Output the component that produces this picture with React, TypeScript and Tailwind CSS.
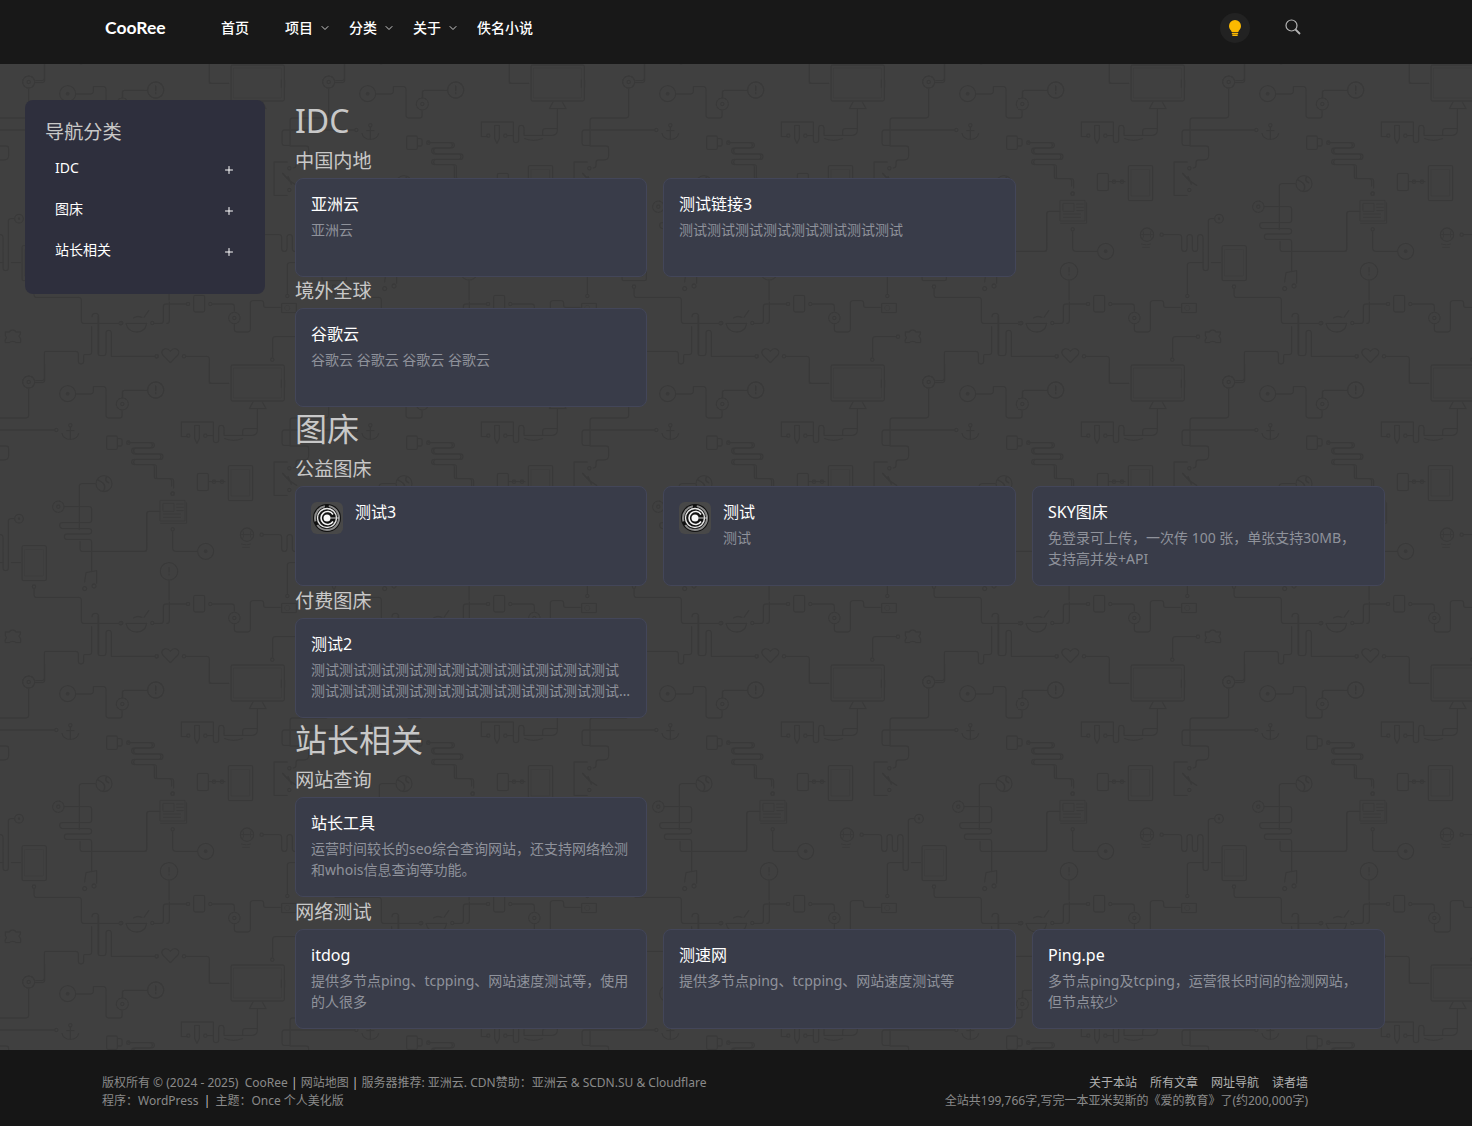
import React from 'react';
import { ChevronDown, Plus } from 'lucide-react';

interface Site {
  title: string;
  desc?: string;
  icon?: boolean;
}

interface Group {
  name: string;
  rows: string;
  sites: Site[];
}

interface Category {
  name: string;
  groups: Group[];
}

const t = '测试测试测试测试测试测试测试测试测试测试测试';

const categories: Category[] = [
  {
    name: 'IDC',
    groups: [
      {
        name: '中国内地',
        rows: 'auto-rows-[99px]',
        sites: [
          { title: '亚洲云', desc: '亚洲云' },
          { title: '测试链接3', desc: '测试测试测试测试测试测试测试测试' },
        ],
      },
      {
        name: '境外全球',
        rows: 'auto-rows-[99px]',
        sites: [{ title: '谷歌云', desc: '谷歌云 谷歌云 谷歌云 谷歌云' }],
      },
    ],
  },
  {
    name: '图床',
    groups: [
      {
        name: '公益图床',
        rows: 'auto-rows-[100px] mb-px',
        sites: [
          { title: '测试3', icon: true },
          { title: '测试', desc: '测试', icon: true },
          { title: 'SKY图床', desc: '免登录可上传，一次传 100 张，单张支持30MB，支持高并发+API' },
        ],
      },
      { name: '付费图床', rows: 'auto-rows-[100px]', sites: [{ title: '测试2', desc: t + t + t }] },
    ],
  },
  {
    name: '站长相关',
    groups: [
      {
        name: '网站查询',
        rows: 'auto-rows-[100px] mb-px',
        sites: [{ title: '站长工具', desc: '运营时间较长的seo综合查询网站，还支持网络检测和whois信息查询等功能。' }],
      },
      {
        name: '网络测试',
        rows: 'auto-rows-[100px]',
        sites: [
          { title: 'itdog', desc: '提供多节点ping、tcpping、网站速度测试等，使用的人很多' },
          { title: '测速网', desc: '提供多节点ping、tcpping、网站速度测试等' },
          { title: 'Ping.pe', desc: '多节点ping及tcping，运营很长时间的检测网站，但节点较少' },
        ],
      },
    ],
  },
];

// one 300px tile of the circuit wallpaper, in 3x coordinates
const TileArt = () => (
  <g fill="none" stroke="#393939" strokeWidth="4" strokeLinecap="round" strokeLinejoin="round">
    {/* monitor */}
    <rect x="333" y="15" width="160" height="108" rx="5" />
    <path d="M342 24h142v90h-142z" strokeWidth="2" />
    <path d="M400 124l-12 22h50l-12-22M484 60v22M494 60v22" />
    <path d="M326 70h-58v-60" />
    <path d="M412 148v62q0 16-16 16h-28v-12q0-8 8-8h36M368 226h-56M312 226v-22q0-8-8-8t-8 8v36q0 8-8 8t-8-8v-54h-96v44h20" />
    <circle cx="205" cy="227" r="5" />
    <circle cx="256" cy="227" r="5" />
    <path d="M262 227h18M314 236q26 10 54 0" />
    <path d="M224 196h14v40l-7 14-7-14z" />
    {/* warn badge + gear */}
    <circle cx="107" cy="90" r="24" strokeDasharray="5 3" />
    <path d="M107 78v14M107 98v3" />
    <path d="M80 91h-66q-6 0-6 6v16" />
    <circle cx="907" cy="132" r="18" strokeDasharray="6 4" />
    <circle cx="907" cy="132" r="5" />
    <path d="M907 113v-16q0-6 6-6h60" />
    <circle cx="1007" cy="90" r="24" strokeDasharray="5 3" />
    <path d="M1007 78v14M1007 98v3" />
    <circle cx="743" cy="101" r="24" />
    <circle cx="743" cy="101" r="4" fill="#393939" />
    <path d="M768 102h44q8 0 8-8v-14h30q8 0 8 8v78q0 8 8 8h34q6 0 6-6v-16" />
    {/* gear + long wire */}
    <circle cx="626" cy="66" r="18" strokeDasharray="6 4" />
    <circle cx="626" cy="66" r="5" />
    <path d="M646 68h20q8 0 8-8v-48M626 86v80q0 8-8 8h-100q-8 0-8 8v76h48q8 0 8 8v20q0 14-14 14h-16q-8 0-8 8v8q0 8-8 8" />
    <path d="M510 210h-16q-8 0-8 8v30q0 8 8 8h16" />
    <path d="M514 210h190" />
    <circle cx="709" cy="210" r="5" />
    <circle cx="751" cy="196" r="5" />
    <path d="M751 201v36M740 212h22M726 220q4 18 25 18t25-18" />
    {/* mug + coil */}
    <rect x="860" y="228" width="32" height="40" rx="4" />
    <path d="M892 236h10q4 0 4 4v14q0 4-4 4h-10" />
    <circle cx="925" cy="248" r="5" />
    <path d="M931 248h64q8 0 8 8t-8 8h-46q-8 0-8 8t8 10h72q8 0 8 8t-8 8h-72q-8 0-8 8t8 8h54q6 0 6 6v30q0 6 6 6h38q8 0 8 8v20" />
    <circle cx="1058" cy="401" r="5" />
    <circle cx="158" cy="401" r="5" />
    <path d="M25 248h64q8 0 8 8t-8 8h-46q-8 0-8 8t8 10h72q8 0 8 8t-8 8h-72q-8 0-8 8t8 8h54q6 0 6 6v30q0 6 6 6h38q8 0 8 8v14" />
    <circle cx="25" cy="248" r="5" />
    {/* phone + tablet */}
    <rect x="232" y="340" width="33" height="52" rx="5" />
    <path d="M265 365h50" />
    <circle cx="282" cy="365" r="5" />
    <circle cx="306" cy="365" r="5" />
    <rect x="325" y="317" width="73" height="105" rx="4" />
    <path d="M334 328h55v80h-55z" strokeWidth="2" />
    {/* pen tool */}
    <circle cx="508" cy="325" r="5" />
    <circle cx="508" cy="390" r="5" />
    <path d="M502 306h-40v100h40" />
    <path d="M488 340l20 22 22 14M514 372l-10-22" strokeWidth="5" />
    {/* newspaper */}
    <rect x="121" y="421" width="74" height="62" strokeWidth="3" />
    <path d="M200 428v62h-78M130 430h32v24h-32zM170 432h20M170 442h20M170 452h20M130 462h52M130 472h52" strokeWidth="3" />
    <path d="M120 454h-32q-8 0-8 8v104q0 8-8 8h-72" />
    <circle cx="158" cy="508" r="5" />
    <path d="M158 514v50q0 10 10 10h62" />
    <circle cx="257" cy="574" r="24" />
    <circle cx="257" cy="574" r="4" fill="#393939" />
    {/* globe + wire */}
    <circle cx="852" cy="371" r="24" />
    <path d="M834 360q18 8 20 18t-6 16M860 350q-8 12 6 18" strokeWidth="5" />
    <path d="M826 371h-40q-8 0-8 8v130" />
    <circle cx="715" cy="440" r="17" strokeDasharray="6 4" />
    <circle cx="715" cy="440" r="5" />
    <path d="M733 440h74q8 0 8 8v32q0 8-8 8h-80q-8 0-8 8t8 10h80q8 0 8 8t-8 8h-66q-8 0-8 8t8 8h66q8 0 8 8v88" />
    <path d="M780 544v22q0 8 8 8h188q4 0 4-4V462q0-8 8-8h32" />
    <path d="M794 666l4-28 32-6v38M794 680a6 6 0 1 0 .1 0M822 672a6 6 0 1 0 .1 0" />
    {/* tablet and ball */}
    <circle cx="381" cy="524" r="20" />
    <path d="M368 510q8 14 0 28M394 510q-8 14 0 28M362 524h38M364 552q16 6 28 0M368 562h20" strokeWidth="3" />
    <circle cx="425" cy="524" r="5" />
    <path d="M431 524h46q8 0 8 8v34q0 8 8 8t8-8v-34q0-8 8-8t8 8v34q0 8 8 8t8-8v-34q0-8 8-8t8 8v92q0 8 8 8t8-8V484q0-8 8-8h8" />
    <circle cx="597" cy="476" r="13" />
    <circle cx="597" cy="476" r="2" fill="#393939" />
    <path d="M550 608h-40q-8 0-8 8v86M574 608h28" />
    <circle cx="502" cy="708" r="5" />
    <rect x="606" y="557" width="73" height="105" rx="5" />
    <path d="M615 568h55v80h-55z" strokeWidth="2" />
    <circle cx="642" cy="680" r="5" />
    <path d="M642 686v18q0 8 8 8h126q8 0 8 8v62q0 8 8 8h104" />
    <circle cx="902" cy="790" r="5" />
    {/* warn + phone + bowl row */}
    <circle cx="147" cy="634" r="26" strokeDasharray="5 3" />
    <path d="M147 622v14M147 642v3M147 662v58" />
    <rect x="221" y="706" width="33" height="50" rx="5" />
    <circle cx="204" cy="732" r="5" />
    <circle cx="271" cy="732" r="5" />
    <path d="M198 732h-60q-8 0-8 8v42q0 8-8 8h-20M148 726v56q0 8-8 8M277 732h58q8 0 8 8v14" />
    <circle cx="97" cy="789" r="5" />
    <path d="M18 790h62q-4 26-30 26t-32-26zM40 774q12-8 26-2M72 772l14-20" />
    <circle cx="4" cy="789" r="5" />
    <circle cx="343" cy="774" r="17" strokeDasharray="6 4" />
    <circle cx="343" cy="774" r="5" />
    <path d="M343 794v14q0 8 8 8h32q8 0 8-8v-78q0-8 8-8h24q8 0 8 8v6q0 6 6 6h44" />
    <rect x="485" y="730" width="44" height="28" rx="2" />
    <circle cx="502" cy="744" r="8" strokeWidth="2" />
    {/* puzzle */}
    <path d="M556 816h12q2-6 10-6t10 6h14q0 8-4 10t4 10v12h-14q-2-4-10-4t-10 4h-12q-2-10 2-12t-2-8z" />
    <circle cx="534" cy="830" r="5" />
    <path d="M528 830h-62q-8 0-8 8v54" />
    <circle cx="457" cy="899" r="5" />
    {/* heart and lower wires */}
    <path d="M151 908l-22-22q-8-12 2-18t20 6q10-12 20-6t2 18z" />
    <circle cx="110" cy="889" r="5" />
    <circle cx="192" cy="889" r="5" />
    <path d="M104 889h-104M198 889h62q8 0 8 8v65q0 8 8 8h50" />
    <circle cx="1010" cy="889" r="5" />
    <path d="M1004 889h-122q-8 0-8 0v-70q0-8-8-8t-8 8v60q0 8-8 8h-8q-8 0-8-8v-110M816 770q0-10 10-10t10 10v110" />
    <path d="M815 800v76q0 8-8 8t-8 0h-6q-2 0-2 8v12q0 8-8 8t-8-8v-22q0-8-8-8h-90q-4 0-4 8v72q0 8-8 8h-18" />
    <circle cx="626" cy="966" r="18" strokeDasharray="6 4" />
  </g>
);

const CircuitBackdrop = () => (
  <svg className="absolute inset-0 w-full h-full" aria-hidden="true">
    <defs>
      <pattern
        id="circuit"
        width="900"
        height="900"
        patternUnits="userSpaceOnUse"
        patternTransform="translate(1020 60) scale(0.33333)"
      >
        <TileArt />
        <g transform="translate(-900 0)"><TileArt /></g>
        <g transform="translate(0 -900)"><TileArt /></g>
        <g transform="translate(-900 -900)"><TileArt /></g>
      </pattern>
    </defs>
    <rect width="100%" height="100%" fill="url(#circuit)" />
  </svg>
);

const DiscIcon = () => (
  <span className="flex items-center justify-center w-8 h-8 shrink-0 rounded-md bg-[#484848] mr-3">
    <svg width="30" height="30" viewBox="0 0 30 30">
      <circle cx="15" cy="15" r="14" fill="#111111" />
      <circle cx="15" cy="15" r="12" fill="none" stroke="#8c8c8c" strokeWidth="2" strokeDasharray="30 4 20 4" />
      <circle cx="15" cy="15" r="9.500" fill="none" stroke="#e8e8e8" strokeWidth="1.400" />
      <path d="M21 11.500A6.500 6.500 0 1 0 21 18.500" fill="none" stroke="#f4f4f4" strokeWidth="1.600" />
      <circle cx="15" cy="15" r="3.500" fill="#f6f6f6" />
      <path d="M18 15h9" stroke="#cccccc" strokeWidth="1" />
    </svg>
  </span>
);

const SiteCard = ({ site }: { site: Site }) => (
  <div className="flex rounded-lg border border-[#434659] bg-[#393c49] px-[15px] pt-[13px] overflow-hidden">
    {site.icon && (
      <span className="pt-0.5">
        <DiscIcon />
      </span>
    )}
    <div className="min-w-0">
      <div className="text-base leading-6 text-white">{site.title}</div>
      {site.desc && (
        <div className="mt-[3px] text-sm leading-[21px] text-[#8f929b] line-clamp-2">{site.desc}</div>
      )}
    </div>
  </div>
);

const NavLink = ({ label, menu, width }: { label: string; menu?: boolean; width: string }) => (
  <a className={`flex items-center text-sm font-medium text-white ${width}`}>
    {label}
    {menu && <ChevronDown className="w-3 h-3 ml-1.5 text-[#cccccc]" strokeWidth={2} />}
  </a>
);

export default function App() {
  return (
    <div
      className="relative min-h-[1126px] bg-[#404040] overflow-hidden"
      style={{ fontFamily: '"Noto Sans", "Noto Sans CJK SC", sans-serif' }}
    >
      <CircuitBackdrop />

      {/* Header */}
      <header className="relative flex items-start h-16 bg-[#181818] pl-[105px] pr-[171px]">
        <a
          className="w-[116px] h-14 leading-14 text-[17.5px] font-bold text-white"
          style={{ fontFamily: 'Lato, sans-serif' }}
        >
          CooRee
        </a>
        <nav className="flex items-center h-[55px]">
          <NavLink label="首页" width="w-16" />
          <NavLink label="项目" menu width="w-16" />
          <NavLink label="分类" menu width="w-16" />
          <NavLink label="关于" menu width="w-16" />
          <NavLink label="佚名小说" width="w-16" />
        </nav>
        <div className="flex items-center h-14 ml-auto">
          <span className="flex items-center justify-center w-[30px] h-[30px] rounded-full bg-[#222222] mr-[35px]">
            <svg width="14" height="16" viewBox="0 0 14 16" fill="#fcb900">
              <path d="M7 0a6 6 0 0 0-6 6c0 2.2 1.2 3.4 2 4.6.4.6.6 1 .6 1.4h6.800c0-.4.2-.8.6-1.400.8-1.200 2-2.400 2-4.600a6 6 0 0 0-6-6z" />
              <rect x="3.800" y="12.800" width="6.400" height="1.400" rx=".5" />
              <rect x="4.300" y="14.600" width="5.400" height="1.400" rx=".5" />
            </svg>
          </span>
          <svg width="16" height="16" viewBox="0 0 16 16" fill="none" stroke="#b4b4b4" className="-mt-0.5">
            <circle cx="6.500" cy="6.500" r="5.500" strokeWidth="1.200" />
            <path d="M10.500 10.500L15 15" strokeWidth="1.800" />
          </svg>
        </div>
      </header>

      {/* Body */}
      <div className="relative flex items-start pl-[25px] h-[986px]">
        <aside className="w-60 h-[194px] mt-9 shrink-0 rounded-lg bg-[#2e2f3d] pl-5 pr-[30px] pt-[17px]">
          <div className="text-[19.2px] leading-[30px] text-[#c8c8c8]">导航分类</div>
          {categories.map(c => (
            <div key={c.name} className="flex items-center justify-between h-[41px] pl-2.5 text-sm text-white first:mt-2">
              {c.name}
              <Plus className="w-3 h-3 mt-1" strokeWidth={2} />
            </div>
          ))}
        </aside>

        <main className="w-[1090px] ml-[30px] pt-[35px]">
          {categories.map(c => (
            <section key={c.name}>
              <h1 className="h-[48px] text-[32px] leading-[44px] text-[#c8c8c8]">{c.name}</h1>
              {c.groups.map(g => (
                <div key={g.name}>
                  <h3 className="h-[31px] text-[19.2px] leading-[28px] text-[#c8c8c8]">{g.name}</h3>
                  <div className={`grid grid-cols-[352px_353px_353px] gap-4 ${g.rows}`}>
                    {g.sites.map(s => (
                      <SiteCard key={s.title} site={s} />
                    ))}
                  </div>
                </div>
              ))}
            </section>
          ))}
        </main>
      </div>

      {/* Footer */}
      <footer className="relative flex justify-between h-[76px] bg-[#161616] pl-[102px] pr-[164px] pt-[24px] text-xs leading-[18px] text-[#8a8a8a]">
        <div>
          <div>
            版权所有 © (2024 - 2025)&nbsp; CooRee <span className="text-[#c0c0c0]">|</span> 网站地图{' '}
            <span className="text-[#c0c0c0]">|</span> 服务器推荐: 亚洲云. CDN赞助：亚洲云 &amp; SCDN.SU &amp; Cloudflare
          </div>
          <div>
            程序：WordPress <span className="text-[#c0c0c0] mx-0.5">|</span> 主题：Once 个人美化版
          </div>
        </div>
        <div className="text-right">
          <div className="flex justify-end gap-[13px] text-[#b0b0b0]">
            <span>关于本站</span>
            <span>所有文章</span>
            <span>网址导航</span>
            <span>读者墙</span>
          </div>
          <div>全站共199,766字,写完一本亚米契斯的《爱的教育》了(约200,000字)</div>
        </div>
      </footer>
    </div>
  );
}
